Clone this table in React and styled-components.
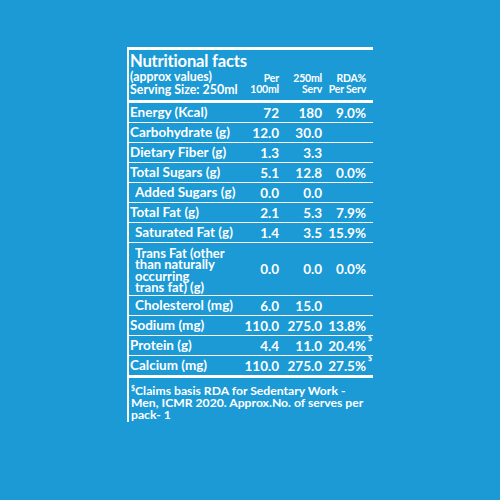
import React from "react";
import styled, { createGlobalStyle } from "styled-components";

const Global = createGlobalStyle`
  html, body { margin: 0; padding: 0; }
  body {
    background: #1b9ad6;
    font-family: Lato, "Open Sans", "Liberation Sans", sans-serif;
    color: #fff;
  }
`;

const Page = styled.div`
  width: 500px;
  height: 500px;
  box-sizing: border-box;
  padding-top: 47px;
  display: flex;
  flex-direction: column;
  align-items: center;
  background: #1b9ad6;
`;

const Panel = styled.div`
  width: 246px;
  box-sizing: border-box;
  border-left: 2px solid #fff;
  border-top: 3px solid #fff;
  font-weight: 700;
`;

const COLS = "minmax(0, 1fr) 48px 43px 44px";

const Header = styled.div`
  display: grid;
  grid-template-columns: ${COLS};
  padding: 3px 7px 4px 1px;
  border-bottom: 3px solid #fff;
  align-items: end;
`;

const Title = styled.div`
  grid-column: 1 / -1;
  font-size: 16.6px;
  line-height: 17px;
  letter-spacing: -0.2px;
`;

const SubTitle = styled.div`
  font-size: 12.4px;
  line-height: 13px;
  white-space: nowrap;
`;

const ColHead = styled.div`
  font-size: 10.5px;
  line-height: 11px;
  text-align: right;
  white-space: nowrap;
  letter-spacing: -0.2px;
  padding-bottom: 1px;
`;

const Row = styled.div`
  display: grid;
  grid-template-columns: ${COLS};
  align-items: center;
  min-height: 19px;
  padding: 0 7px 0 1px;
  border-bottom: ${(p) => (p.$last ? "3px" : "1.5px")} solid #fff;
  font-size: 13.5px;
`;

const Label = styled.div`
  padding-left: ${(p) => (p.$indent ? "5px" : "0")};
  white-space: nowrap;
  font-size: ${(p) => (p.$wrap ? "13px" : "inherit")};
  line-height: ${(p) => (p.$wrap ? "11.3px" : "19px")};
  padding-top: ${(p) => (p.$wrap ? "5px" : "0")};
  padding-bottom: ${(p) => (p.$wrap ? "2px" : "0")};
`;

const Value = styled.div`
  text-align: right;
  white-space: nowrap;
  position: relative;
`;

const Sup = styled.sup`
  position: absolute;
  right: -6px;
  top: -3px;
  font-size: 7px;
  line-height: 1;
`;

const Foot = styled.div`
  padding: 7px 4px 1px 2px;
  font-size: 12.2px;
  line-height: 12px;
  white-space: nowrap;
`;

const FootSup = styled.sup`
  font-size: 7px;
  vertical-align: top;
  line-height: 1;
`;

const rows = [
  ["Energy (Kcal)", "72", "180", "9.0%"],
  ["Carbohydrate (g)", "12.0", "30.0", ""],
  ["Dietary Fiber (g)", "1.3", "3.3", ""],
  ["Total Sugars (g)", "5.1", "12.8", "0.0%"],
  ["Added Sugars (g)", "0.0", "0.0", "", { indent: true }],
  ["Total Fat (g)", "2.1", "5.3", "7.9%"],
  ["Saturated Fat (g)", "1.4", "3.5", "15.9%", { indent: true }],
  [
    "Trans Fat (other than naturally occurring trans fat) (g)",
    "0.0",
    "0.0",
    "0.0%",
    { indent: true, wrap: true },
  ],
  ["Cholesterol (mg)", "6.0", "15.0", "", { indent: true }],
  ["Sodium (mg)", "110.0", "275.0", "13.8%"],
  ["Protein (g)", "4.4", "11.0", "20.4%", { sup: true }],
  ["Calcium (mg)", "110.0", "275.0", "27.5%", { sup: true, last: true }],
];

export default function App() {
  return (
    <Page>
      <Global />
      <Panel>
        <Header>
          <Title>Nutritional facts</Title>
          <SubTitle>
            (approx values)
            <br />
            Serving Size: 250ml
          </SubTitle>
          <ColHead>
            Per
            <br />
            100ml
          </ColHead>
          <ColHead>
            250ml
            <br />
            Serv
          </ColHead>
          <ColHead>
            RDA%
            <br />
            Per Serv
          </ColHead>
        </Header>
        {rows.map(([label, a, b, c, opt = {}]) => (
          <Row key={label} $last={opt.last}>
            <Label $indent={opt.indent} $wrap={opt.wrap}>
              {opt.wrap ? (
                <>
                  Trans Fat (other
                  <br />
                  than naturally
                  <br />
                  occurring
                  <br />
                  trans fat) (g)
                </>
              ) : (
                label
              )}
            </Label>
            <Value>{a}</Value>
            <Value>{b}</Value>
            <Value>
              {c}
              {opt.sup && <Sup>$</Sup>}
            </Value>
          </Row>
        ))}
        <Foot>
          <FootSup>$</FootSup>Claims basis RDA for Sedentary Work -
          <br />
          Men, ICMR 2020. Approx.No. of serves per
          <br />
          pack- 1
        </Foot>
      </Panel>
    </Page>
  );
}
